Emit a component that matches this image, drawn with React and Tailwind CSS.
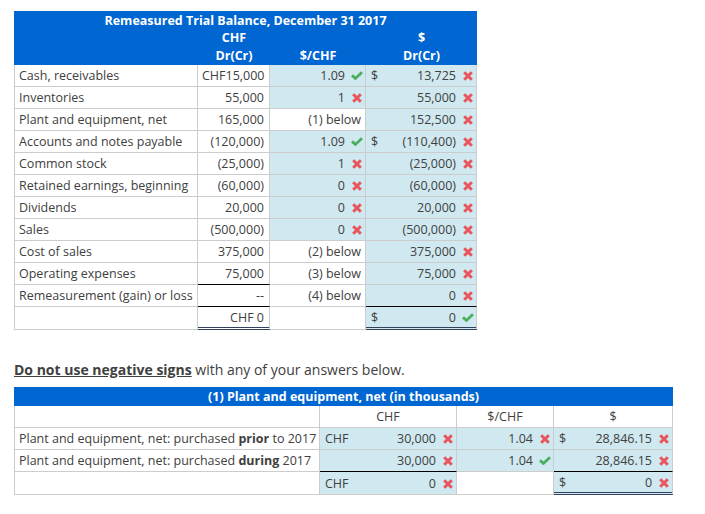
import React from "react";

function Mark({ m }) {
  return (
    <span className="ml-[5px] mr-[1px] flex w-[14px] shrink-0 items-center justify-center">
      {m === "x" && (
        <svg viewBox="0 0 10 10" className="h-[10px] w-[10px] text-[#e8555c]" fill="none" stroke="currentColor" strokeWidth="3">
          <path d="M1.2 1.2L8.8 8.8M8.8 1.2L1.2 8.8" />
        </svg>
      )}
      {m === "c" && (
        <svg viewBox="0 0 12 9" className="h-[9px] w-[12px] text-[#4cae5f]" fill="none" stroke="currentColor" strokeWidth="2.8">
          <path d="M1 4.4L4.4 7.4L11 1.2" />
        </svg>
      )}
    </span>
  );
}

function Input({ value, mark, dollar, cell = "" }) {
  return (
    <td className={`border-r border-b border-[#cccccc] bg-[#d0e8ef] p-0 ${cell}`}>
      <div className="flex items-center">
        {dollar && <span className="pl-[5px]">{dollar}</span>}
        <span className="flex-1 text-right">{value}</span>
        <Mark m={mark} />
      </div>
    </td>
  );
}

function Plain({ children, cell = "", align = "text-right" }) {
  return (
    <td className={`whitespace-nowrap border-r border-b border-[#cccccc] bg-white px-[4px] ${align} ${cell}`}>{children}</td>
  );
}

const rows = [
  ["Cash, receivables", "CHF15,000", { value: "1.09", mark: "c" }, { value: "13,725", mark: "x", dollar: "$" }],
  ["Inventories", "55,000", { value: "1", mark: "x" }, { value: "55,000", mark: "x" }],
  ["Plant and equipment, net", "165,000", "(1) below", { value: "152,500", mark: "x" }],
  ["Accounts and notes payable", "(120,000)", { value: "1.09", mark: "c" }, { value: "(110,400)", mark: "x", dollar: "$" }],
  ["Common stock", "(25,000)", { value: "1", mark: "x" }, { value: "(25,000)", mark: "x" }],
  ["Retained earnings, beginning", "(60,000)", { value: "0", mark: "x" }, { value: "(60,000)", mark: "x" }],
  ["Dividends", "20,000", { value: "0", mark: "x" }, { value: "20,000", mark: "x" }],
  ["Sales", "(500,000)", { value: "0", mark: "x" }, { value: "(500,000)", mark: "x" }],
  ["Cost of sales", "375,000", "(2) below", { value: "375,000", mark: "x" }],
  ["Operating expenses", "75,000", "(3) below", { value: "75,000", mark: "x" }],
];

export default function App() {
  return (
    <div className="h-[514px] w-[705px] overflow-hidden bg-white pl-[14px] pt-[11px] font-['Open_Sans',sans-serif] text-[12.5px] leading-[18px] text-[#404040]">
      <table className="w-[463px] table-fixed border-separate border-spacing-0">
        <colgroup>
          <col className="w-[184px]" />
          <col className="w-[72px]" />
          <col className="w-[96px]" />
          <col className="w-[111px]" />
        </colgroup>
        <thead className="bg-[#0066d1] text-center font-bold text-white">
          <tr className="h-[18px]">
            <th colSpan={4} className="p-0 pt-[1px] font-bold leading-[17px]">Remeasured Trial Balance, December 31 2017</th>
          </tr>
          <tr className="h-[18px]">
            <th className="p-0"></th>
            <th className="p-0 font-bold">CHF</th>
            <th className="p-0"></th>
            <th className="p-0 font-bold">$</th>
          </tr>
          <tr className="h-[18px]">
            <th className="p-0"></th>
            <th className="p-0 font-bold">Dr(Cr)</th>
            <th className="p-0 font-bold">$/CHF</th>
            <th className="p-0 font-bold">Dr(Cr)</th>
          </tr>
        </thead>
        <tbody>
          {rows.map((r, i) => (
            <tr key={i} className="h-[22px]">
              <Plain align="text-left" cell="border-l">{r[0]}</Plain>
              <Plain cell={i === 9 ? "border-b-black pr-[5px]" : "pr-[5px]"}>{r[1]}</Plain>
              {typeof r[2] === "string" ? <Plain>{r[2]}</Plain> : <Input {...r[2]} />}
              <Input {...r[3]} />
            </tr>
          ))}
          <tr className="h-[22px]">
            <Plain align="text-left" cell="border-l">Remeasurement (gain) or loss</Plain>
            <Plain cell="border-b-black pr-[5px]">--</Plain>
            <Plain>(4) below</Plain>
            <Input value="0" mark="x" cell="border-b-black" />
          </tr>
          <tr className="h-[23px]">
            <Plain cell="border-l"></Plain>
            <Plain cell="border-b-[3px] border-double border-b-[#33415c] pr-[5px] pt-[1px]">CHF 0</Plain>
            <Plain></Plain>
            <Input value="0" mark="c" dollar="$" cell="border-b-[3px] border-double border-b-[#33415c] pt-[1px]" />
          </tr>
        </tbody>
      </table>

      <p className="mt-[30px] text-[14px] leading-[20px]">
        <b className="underline">Do not use negative signs</b> with any of your answers below.
      </p>

      <table className="mt-[7px] w-[659px] table-fixed border-separate border-spacing-0">
        <colgroup>
          <col className="w-[306px]" />
          <col className="w-[137px]" />
          <col className="w-[97px]" />
          <col className="w-[119px]" />
        </colgroup>
        <thead>
          <tr className="h-[19px]">
            <th colSpan={4} className="bg-[#0066d1] p-0 text-center font-bold text-white">(1) Plant and equipment, net (in thousands)</th>
          </tr>
        </thead>
        <tbody>
          <tr className="h-[22px]">
            <Plain cell="border-l"></Plain>
            <Plain align="text-center">CHF</Plain>
            <Plain align="text-center">$/CHF</Plain>
            <Plain align="text-center">$</Plain>
          </tr>
          <tr className="h-[22px]">
            <Plain align="text-left" cell="border-l">Plant and equipment, net: purchased <b>prior</b> to 2017</Plain>
            <Input value="30,000" mark="x" dollar="CHF" />
            <Input value="1.04" mark="x" />
            <Input value="28,846.15" mark="x" dollar="$" />
          </tr>
          <tr className="h-[22px]">
            <Plain align="text-left" cell="border-l">Plant and equipment, net: purchased <b>during</b> 2017</Plain>
            <Input value="30,000" mark="x" cell="border-b-black" />
            <Input value="1.04" mark="c" />
            <Input value="28,846.15" mark="x" cell="border-b-black" />
          </tr>
          <tr className="h-[23px]">
            <Plain cell="border-l"></Plain>
            <Input value="0" mark="x" dollar="CHF" cell="pt-[1px]" />
            <Plain></Plain>
            <Input value="0" mark="x" dollar="$" cell="border-b-[3px] border-double border-b-[#33415c] pt-[1px]" />
          </tr>
        </tbody>
      </table>
    </div>
  );
}
